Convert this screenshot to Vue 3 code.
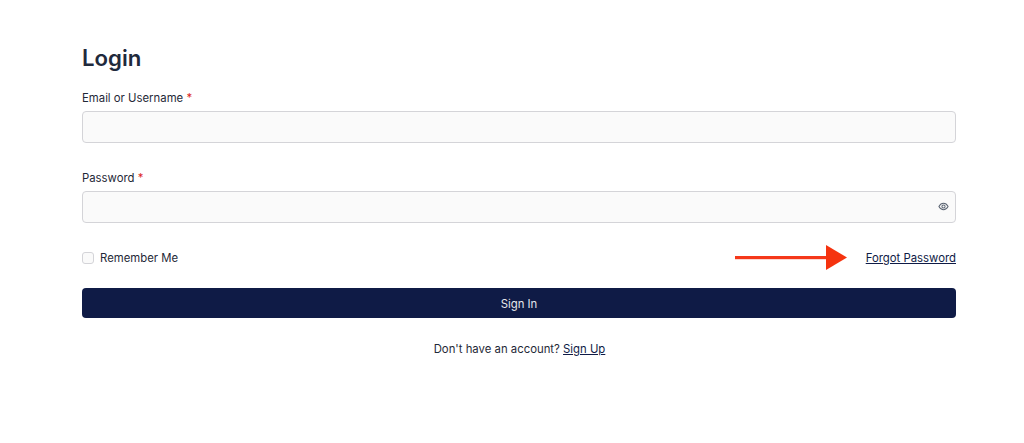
<script setup>
import { ref } from 'vue'
const remember = ref(false)
</script>

<template>
  <main class="page">
    <h1 class="title">Login</h1>
    <form class="form" @submit.prevent>
      <div class="field">
        <label class="label" for="user">Email or Username <span class="req">*</span></label>
        <div class="input-wrap">
          <input id="user" class="input" type="text" />
        </div>
      </div>
      <div class="field field-last">
        <label class="label" for="pass">Password <span class="req">*</span></label>
        <div class="input-wrap">
          <input id="pass" class="input" type="password" />
          <svg class="eye" viewBox="0 0 24 24" fill="none" stroke="#5b6472" stroke-width="2.200">
            <path d="M2 12c2.500-4.600 6-7 10-7s7.500 2.400 10 7c-2.500 4.600-6 7-10 7s-7.500-2.400-10-7z" />
            <circle cx="12" cy="12" r="3.500" />
          </svg>
        </div>
      </div>
      <div class="options">
        <label class="remember">
          <input v-model="remember" class="check" type="checkbox" />
          <span>Remember Me</span>
        </label>
        <div class="forgot-wrap">
          <svg class="arrow" viewBox="0 0 112 26">
            <rect x="0" y="11" width="92" height="3.200" fill="#f5381a" />
            <polygon points="91,0 112,12.500 91,25" fill="#f5330f" />
          </svg>
          <a class="link" href="#">Forgot Password</a>
        </div>
      </div>
      <button class="submit" type="submit">Sign In</button>
    </form>
    <p class="signup">Don't have an account? <a class="link" href="#">Sign Up</a></p>
  </main>
</template>

<style>
html, body { margin: 0; background: #fff; }
</style>

<style scoped>
.page {
  height: 443px;
  box-sizing: border-box;
  padding: 44px 68px 0 82px;
  font-family: Inter, "Liberation Sans", sans-serif;
  color: #1f2937;
  overflow: hidden;
}
.title {
  margin: 0 0 18px;
  font-size: 22.200px;
  line-height: 28px;
  font-weight: 600;
  color: #1f2a3c;
}
.form { display: flex; flex-direction: column; }
.field { display: flex; flex-direction: column; margin-bottom: 27px; }
.field-last { margin-bottom: 22px; }
.label {
  font-size: 11.350px;
  line-height: 16px;
  font-weight: 400;
  margin-bottom: 5px;
  color: #1f2937;
}
.req { color: #dc2626; }
.input-wrap { position: relative; display: flex; }
.input {
  flex: 1;
  min-width: 0;
  height: 32px;
  box-sizing: border-box;
  background: #fafafa;
  border: 1px solid #d4d4d8;
  border-radius: 4px;
  outline: none;
  padding: 0 10px;
}
.eye {
  position: absolute;
  right: 7px;
  top: 10px;
  width: 11px;
  height: 11px;
}
.options {
  display: flex;
  justify-content: space-between;
  align-items: center;
  height: 26px;
}
.remember {
  display: flex;
  align-items: center;
  gap: 6px;
  font-size: 11.350px;
  color: #1f2937;
}
.check {
  appearance: none;
  margin: 0;
  width: 12px;
  height: 12px;
  box-sizing: border-box;
  background: #fafafa;
  border: 1px solid #d4d4d8;
  border-radius: 3px;
}
.forgot-wrap { display: flex; align-items: center; gap: 19px; }
.arrow { width: 112px; height: 26px; }
.link {
  font-size: 11.350px;
  color: #0f1b46;
  text-decoration: underline;
}
.submit {
  margin-top: 17px;
  height: 30px;
  padding: 1px 0 0;
  background: #0f1b46;
  color: #e5e7eb;
  border: none;
  border-radius: 4px;
  font-family: inherit;
  font-size: 11.350px;
}
.signup {
  margin: 23px 0 0;
  padding-left: 1px;
  text-align: center;
  font-size: 11.350px;
  line-height: 16px;
  color: #1f2937;
}
</style>
